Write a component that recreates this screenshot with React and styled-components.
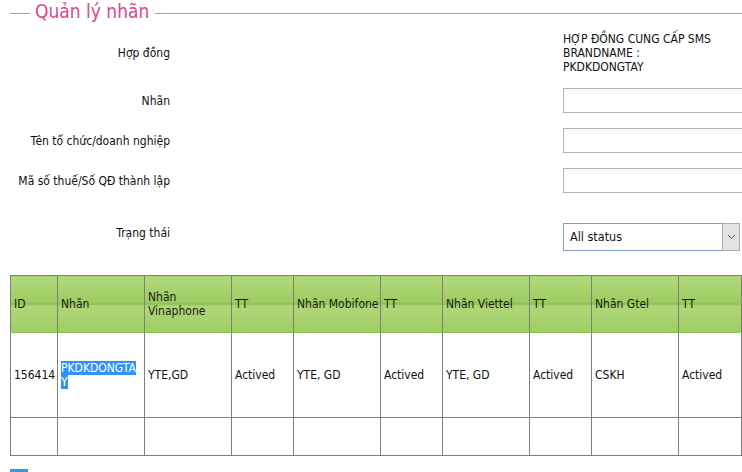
import React from "react";
import styled, { createGlobalStyle } from "styled-components";

const GlobalStyle = createGlobalStyle`
  html, body {
    margin: 0;
    padding: 0;
    background: #fff;
    overflow: hidden;
  }
  body {
    font-family: "DejaVu Sans Condensed", "Liberation Sans", sans-serif;
    font-size: 12px;
    color: #111;
  }
`;

// khung "Quản lý nhãn"
const Box = styled.fieldset`
  margin: 0 0 0 10px;
  padding: 0;
  border: none;
  border-top: 1px solid #a3a3a3;
  min-width: 0;
`;

const Legend = styled.legend`
  margin-left: 20px;
  padding: 0 6px 4px 5px;
  font-size: 19px;
  line-height: 22px;
  color: #e2458a;
`;

const Form = styled.div`
  padding-top: 6px;
  display: flex;
  flex-direction: column;
`;

const Row = styled.div`
  display: flex;
  align-items: ${(p) => (p.$top ? "flex-start" : "center")};
  height: ${(p) => p.$h}px;
  margin-top: ${(p) => p.$mt || 0}px;
`;

const Label = styled.div`
  flex-shrink: 0;
  width: 160px;
  text-align: right;
  white-space: nowrap;
  padding-top: ${(p) => p.$pt || 0}px;
`;

const Value = styled.div`
  flex-shrink: 0;
  margin-left: 393px;
  line-height: 14px;
  width: 160px;
`;

const Input = styled.input`
  flex-shrink: 0;
  margin-left: 393px;
  width: 200px;
  height: 25px;
  box-sizing: border-box;
  border: 1px solid #b4b4b4;
  background: linear-gradient(#f6f6f6, #ffffff 40%);
  outline: none;
`;

const Select = styled.div`
  flex-shrink: 0;
  margin-left: 393px;
  width: 177px;
  height: 28px;
  box-sizing: border-box;
  display: flex;
  border: 1px solid #7f9ec7;
  border-right: none;
`;

const SelectText = styled.div`
  flex: 1;
  padding-left: 6px;
  line-height: 26px;
  font-size: 12.5px;
`;

const SelectBtn = styled.div`
  width: 16px;
  background: #e3e3e3;
  border: 1px solid #acacac;
  margin: -1px 0;
  display: flex;
  align-items: center;
  justify-content: center;
`;

// bảng danh sách nhãn
const Table = styled.table`
  margin: 24px 0 0 10px;
  border-collapse: collapse;
  table-layout: fixed;
  width: 732px;
`;

const Col = styled.col`
  width: ${(p) => p.$w}px;
`;

const Th = styled.th`
  height: 56px;
  padding: 0 0 0 3px;
  text-align: left;
  font-weight: normal;
  border: 1px solid #7e7e7e;
  border-bottom-color: #8cbf52;
  background: linear-gradient(#b3d97c 0%, #9dcc62 45%, #8bbf4f 50%, #b1d779 52%, #9fcd64 100%);
  line-height: 14px;
  color: #1a1a1a;
  overflow: hidden;
`;

const Td = styled.td`
  height: ${(p) => p.$h}px;
  padding: 0 ${(p) => (p.$wrap ? 8 : 0)}px 0 3px;
  border: 1px solid #7e7e7e;
  line-height: 14px;
  white-space: ${(p) => (p.$wrap ? "normal" : "nowrap")};
  word-break: ${(p) => (p.$wrap ? "break-all" : "normal")};
`;

const Selected = styled.span`
  background: #3391ff;
  color: #fff;
`;

const Pager = styled.div`
  margin: 13px 0 0 10px;
  width: 18px;
  height: 18px;
  background: #3b97dc;
`;

const columns = [
  ["ID", 47],
  ["Nhãn", 87],
  ["Nhãn Vinaphone", 87],
  ["TT", 62],
  ["Nhãn Mobifone", 87],
  ["TT", 62],
  ["Nhãn Viettel", 87],
  ["TT", 62],
  ["Nhãn Gtel", 87],
  ["TT", 63],
];

const rows = [["156414", "PKDKDONGTAY", "YTE,GD", "Actived", "YTE, GD", "Actived", "YTE, GD", "Actived", "CSKH", "Actived"]];

function App() {
  return (
    <>
      <GlobalStyle />
      <Box>
        <Legend>Quản lý nhãn</Legend>
        <Form>
          <Row $h={42}>
            <Label>Hợp đồng</Label>
            <Value>HỢP ĐỒNG CUNG CẤP SMS BRANDNAME : PKDKDONGTAY</Value>
          </Row>
          <Row $h={25} $mt={14}>
            <Label>Nhãn</Label>
            <Input />
          </Row>
          <Row $h={25} $mt={15}>
            <Label>Tên tổ chức/doanh nghiệp</Label>
            <Input />
          </Row>
          <Row $h={25} $mt={15}>
            <Label>Mã số thuế/Số QĐ thành lập</Label>
            <Input />
          </Row>
          <Row $h={28} $mt={30} $top>
            <Label $pt={3}>Trạng thái</Label>
            <Select>
              <SelectText>All status</SelectText>
              <SelectBtn>
                <svg width="9" height="6" viewBox="0 0 9 6">
                  <path d="M1 1l3.5 3.5L8 1" fill="none" stroke="#555" strokeWidth="1" />
                </svg>
              </SelectBtn>
            </Select>
          </Row>
        </Form>
      </Box>
      <Table>
        <colgroup>
          {columns.map(([, w], i) => (
            <Col key={i} $w={w} />
          ))}
        </colgroup>
        <thead>
          <tr>
            {columns.map(([name], i) => (
              <Th key={i}>{name}</Th>
            ))}
          </tr>
        </thead>
        <tbody>
          {rows.map((r, i) => (
            <tr key={i}>
              {r.map((c, j) =>
                j === 1 ? (
                  <Td key={j} $h={84} $wrap>
                    <Selected>{c}</Selected>
                  </Td>
                ) : (
                  <Td key={j} $h={84}>{c}</Td>
                )
              )}
            </tr>
          ))}
          <tr>
            {columns.map((_, j) => (
              <Td key={j} $h={37} />
            ))}
          </tr>
        </tbody>
      </Table>
      <Pager />
    </>
  );
}

export default App;
